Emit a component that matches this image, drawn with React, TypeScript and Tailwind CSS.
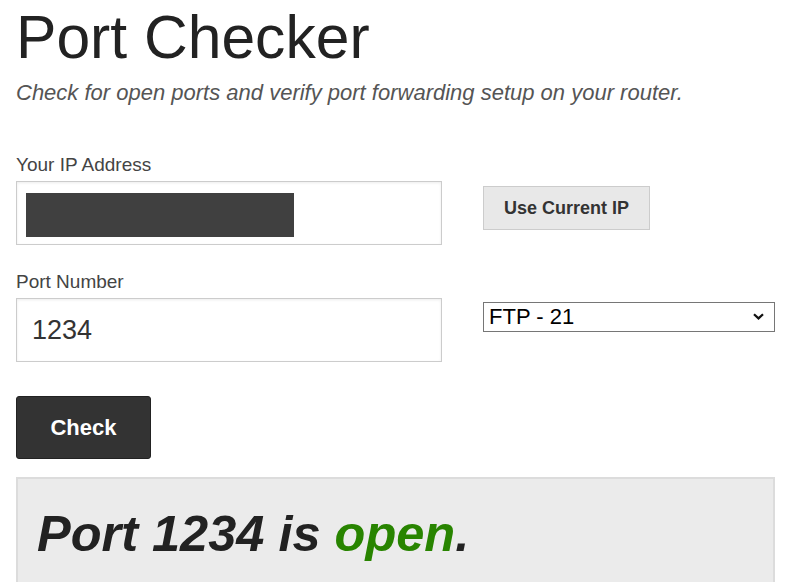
export default function App() {
  return (
    <div className="h-[582px] overflow-hidden bg-white px-4 pt-[7px] font-['Liberation_Sans',Arial,sans-serif]">
      <h1 className="text-[60.6px] leading-[60px] font-normal text-[#222]">Port Checker</h1>
      <p className="mt-[15px] text-[22px] leading-[22px] italic text-[#555]">
        Check for open ports and verify port forwarding setup on your router.
      </p>

      <div className="mt-[51px] grid grid-cols-[426px_292px] gap-x-[41px]">
        <div>
          <label className="block text-[19px] leading-[19px] text-[#444]">Your IP Address</label>
          <div className="mt-[7px] h-[64px] border border-[#ccc] bg-white pl-[9px] pt-[11px] shadow-[inset_0_1px_3px_rgba(0,0,0,0.08)]">
            <div className="h-[44px] w-[268px] bg-[#404040]" />
          </div>
        </div>
        <div className="pt-[31px]">
          <button className="h-[44px] w-[167px] border border-[#ccc] bg-[#e8e8e8] text-[18px] font-bold text-[#333]">
            Use Current IP
          </button>
        </div>
      </div>

      <div className="mt-[27px] grid grid-cols-[426px_292px] gap-x-[41px]">
        <div>
          <label className="block text-[19px] leading-[19px] text-[#444]">Port Number</label>
          <div className="mt-[7px] flex h-[64px] items-center border border-[#ccc] bg-white pl-[15px] shadow-[inset_0_1px_3px_rgba(0,0,0,0.08)]">
            <span className="text-[27px] leading-[27px] text-[#333]">1234</span>
          </div>
        </div>
        <div className="pt-[30px]">
          <div className="relative">
            <select
              defaultValue="21"
              className="block h-[30px] w-full appearance-none border border-[#767676] bg-white pl-[5px] text-[22px] leading-[22px] text-black"
            >
              <option value="21">FTP - 21</option>
              <option value="22">SSH - 22</option>
              <option value="80">HTTP - 80</option>
            </select>
            <svg
              className="pointer-events-none absolute right-[11px] top-[11px]"
              width="11"
              height="7"
              viewBox="0 0 11 7"
              fill="none"
            >
              <path d="M1 1.2 L5.5 5.4 L10 1.2" stroke="#111" strokeWidth="2.2" />
            </svg>
          </div>
        </div>
      </div>

      <button className="mt-[34px] h-[63px] w-[135px] rounded-[3px] border border-[#222] bg-[#333] text-[22px] font-bold text-white">
        Check
      </button>

      <div className="mt-[18px] h-[140px] border-2 border-[#dcdcdc] bg-[#ebebeb] pl-[19px] pt-[30px]">
        <h2 className="text-[50.5px] leading-[50px] font-bold italic text-[#222]">
          Port 1234 is <span className="text-[#288400]">open</span>.
        </h2>
      </div>
    </div>
  );
}
